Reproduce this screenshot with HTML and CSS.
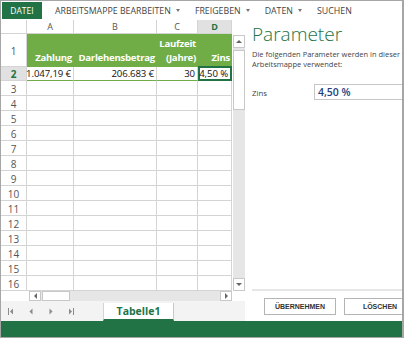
FILE: index.html
```html
<!DOCTYPE html>
<html lang="de">

<head>
    <meta charset="UTF-8">
    <meta name="viewport" content="width=device-width, initial-scale=1.0">
    <title>Tabelle1 - Parameter</title>
    <link rel="stylesheet" href="styles.css">
</head>

<body>

    <div class="app">

        <!-- Menüleiste -->
        <div class="ribbon">
            <span class="tab-file">DATEI</span>
            <span class="menu">ARBEITSMAPPE BEARBEITEN <i class="caret"></i></span>
            <span class="menu">FREIGEBEN <i class="caret"></i></span>
            <span class="menu">DATEN <i class="caret"></i></span>
            <span class="menu">SUCHEN</span>
        </div>

        <div class="main">

            <!-- Tabellenbereich -->
            <div class="sheet">
                <div class="grid-wrap">
                    <div class="grid" id="grid">
                        <div class="corner"></div>
                        <div class="colhead">A</div>
                        <div class="colhead">B</div>
                        <div class="colhead">C</div>
                        <div class="colhead active">D</div>

                        <div class="rowhead">1</div>
                        <div class="cell head">Zahlung</div>
                        <div class="cell head">Darlehensbetrag</div>
                        <div class="cell head">Laufzeit<br>(Jahre)</div>
                        <div class="cell head">Zins</div>

                        <div class="rowhead active">2</div>
                        <div class="cell data">1.047,19&nbsp;€</div>
                        <div class="cell data">206.683&nbsp;€</div>
                        <div class="cell data">30</div>
                        <div class="cell data selected">4,50&nbsp;%</div>
                    </div>
                    <div class="vscroll">
                        <div class="sb-btn"><i class="tri up"></i></div>
                        <div class="sb-thumb"></div>
                        <div class="sb-track"></div>
                        <div class="sb-btn"><i class="tri down"></i></div>
                    </div>
                </div>

                <div class="hscroll">
                    <div class="hs-btn"><i class="tri left"></i></div>
                    <div class="hs-thumb"></div>
                    <div class="hs-track"></div>
                    <div class="hs-btn"><i class="tri right"></i></div>
                </div>

                <div class="tabbar">
                    <div class="nav">
                        <svg width="6" height="7" viewBox="0 0 6 7"><rect x="0" y="0" width="1" height="7" fill="#8a8a8a"/><path d="M5 0.5 L2 3.5 L5 6.5 Z" fill="#8a8a8a"/></svg>
                        <svg width="6" height="7" viewBox="0 0 6 7"><path d="M4.5 0.5 L1.5 3.5 L4.5 6.5 Z" fill="#8a8a8a"/></svg>
                        <svg width="6" height="7" viewBox="0 0 6 7"><path d="M1.5 0.5 L4.5 3.5 L1.5 6.5 Z" fill="#8a8a8a"/></svg>
                        <svg width="6" height="7" viewBox="0 0 6 7"><path d="M1 0.5 L4 3.5 L1 6.5 Z" fill="#8a8a8a"/><rect x="5" y="0" width="1" height="7" fill="#8a8a8a"/></svg>
                    </div>
                    <div class="sheet-tab">Tabelle1</div>
                </div>
            </div>

            <!-- Aufgabenbereich -->
            <div class="pane">
                <h1>Parameter</h1>
                <p class="desc">Die folgenden Parameter werden in dieser Arbeitsmappe verwendet:</p>
                <div class="param">
                    <label for="zins">Zins</label>
                    <input type="text" id="zins" value="4,50 %">
                </div>
                <div class="pane-footer">
                    <button type="button">ÜBERNEHMEN</button>
                    <button type="button">LÖSCHEN</button>
                </div>
            </div>

        </div>

        <div class="statusbar"></div>

    </div>

    <script>
        // leere Zeilen 3 bis 16 erzeugen
        const grid = document.getElementById('grid');
        for (let r = 3; r <= 16; r++) {
            const head = document.createElement('div');
            head.className = 'rowhead';
            head.textContent = r;
            grid.appendChild(head);
            for (let c = 0; c < 4; c++) {
                const cell = document.createElement('div');
                cell.className = 'cell';
                grid.appendChild(cell);
            }
        }
    </script>

</body>

</html>
```

FILE: styles.css
```css
* {
    box-sizing: border-box;
}

body {
    margin: 0;
    font-family: "Open Sans", "Noto Sans", sans-serif;
    background: white;
}

.app {
    width: 404px;
    height: 338px;
    border: 1px solid #a6a6a6;
    border-right-width: 2px;
    display: flex;
    flex-direction: column;
    overflow: hidden;
}

/* Menüleiste */

.ribbon {
    height: 19px;
    display: flex;
    align-items: center;
    padding-left: 1px;
    font-size: 8.8px;
    color: #444;
    white-space: nowrap;
}

.tab-file {
    background: #217346;
    color: white;
    height: 17px;
    width: 40px;
    display: flex;
    align-items: center;
    justify-content: center;
    margin-right: 13px;
    font-size: 8.5px;
}

.menu {
    margin-right: 15px;
    display: flex;
    align-items: center;
}

.caret {
    display: inline-block;
    margin-left: 5px;
    border-left: 2.5px solid transparent;
    border-right: 2.5px solid transparent;
    border-top: 3px solid #777;
}

.main {
    flex: 1;
    display: flex;
    min-height: 0;
}

/* Tabelle */

.sheet {
    width: 244px;
    display: flex;
    flex-direction: column;
}

.grid-wrap {
    display: flex;
}

.grid {
    display: grid;
    grid-template-columns: 26px 47px 83px 41px 34px;
    grid-template-rows: 14px 33px 14px repeat(14, 15px);
    font-size: 9.6px;
}

.corner,
.colhead,
.rowhead,
.cell {
    border-right: 1px solid #d4d4d4;
    border-bottom: 1px solid #d4d4d4;
}

.colhead {
    color: #555;
    text-align: center;
    font-size: 9px;
    line-height: 13px;
}

.colhead.active {
    background: #e1e1e1;
    color: #217346;
    font-weight: bold;
}

.rowhead {
    color: #555;
    text-align: center;
    font-size: 10px;
    display: flex;
    align-items: center;
    justify-content: center;
    padding-top: 1px;
}

.rowhead.active {
    background: #e1e1e1;
    color: #217346;
    font-weight: bold;
}

.cell {
    white-space: nowrap;
    text-align: right;
    padding: 0 2px 0 0;
    display: flex;
    justify-content: flex-end;
}

.cell.head {
    background: #70ad47;
    border-right: none;
    border-bottom-color: #70ad47;
    color: white;
    font-weight: bold;
    letter-spacing: -0.25px;
    align-items: flex-end;
    line-height: 14px;
    padding-bottom: 1px;
}

.cell.data {
    color: #111;
    align-items: center;
    border-bottom: 1px solid #70ad47;
    overflow: visible;
    letter-spacing: -0.1px;
}

.cell.selected {
    border: 2px solid #217346;
    margin-top: -1px;
}

/* Bildlaufleisten */

.vscroll {
    width: 12px;
    margin-top: 15px;
    margin-left: 1px;
    display: flex;
    flex-direction: column;
    background: #e6e6e6;
}

.sb-btn,
.hs-btn {
    background: white;
    border: 1px solid #c8c8c8;
    display: flex;
    align-items: center;
    justify-content: center;
}

.sb-btn {
    height: 13px;
}

.sb-thumb {
    height: 60px;
    background: white;
    border: 1px solid #c8c8c8;
    margin-top: 2px;
}

.sb-track {
    flex: 1;
}

.tri {
    display: block;
    width: 0;
    height: 0;
}

.tri.up {
    border-left: 3px solid transparent;
    border-right: 3px solid transparent;
    border-bottom: 3px solid #666;
}

.tri.down {
    border-left: 3px solid transparent;
    border-right: 3px solid transparent;
    border-top: 3px solid #666;
}

.tri.left {
    border-top: 3px solid transparent;
    border-bottom: 3px solid transparent;
    border-right: 3px solid #666;
}

.tri.right {
    border-top: 3px solid transparent;
    border-bottom: 3px solid transparent;
    border-left: 3px solid #666;
}

.hscroll {
    height: 10px;
    margin-left: 28px;
    width: 203px;
    display: flex;
    background: #e6e6e6;
}

.hs-btn {
    width: 12px;
}

.hs-thumb {
    width: 28px;
    background: white;
    border: 1px solid #c8c8c8;
    margin-left: 1px;
}

.hs-track {
    flex: 1;
}

/* Blattregister */

.tabbar {
    flex: 1;
    background: #f3f3f3;
    display: flex;
    align-items: flex-end;
}

.nav {
    display: flex;
    gap: 14px;
    padding-left: 7px;
    align-self: center;
    width: 102px;
}

.sheet-tab {
    width: 71px;
    height: 18px;
    background: white;
    border-left: 1px solid #d4d4d4;
    border-right: 1px solid #c8c8c8;
    border-bottom: 2px solid #217346;
    color: #217346;
    font-weight: bold;
    font-size: 10.5px;
    text-align: center;
    line-height: 16px;
}

/* Aufgabenbereich */

.pane {
    flex: 1;
    padding: 0 0 0 7px;
    display: flex;
    flex-direction: column;
    overflow: hidden;
    background: white;
}

.pane h1 {
    margin: 1px 0 0;
    font-size: 19px;
    font-weight: 300;
    color: #217346;
    line-height: 26px;
}

.desc {
    margin: 2px 0 0;
    font-size: 7.5px;
    line-height: 10px;
    color: #444;
    width: 150px;
}

.param {
    margin-top: 15px;
    display: flex;
    align-items: center;
}

.param label {
    flex: none;
    font-size: 7.8px;
    color: #444;
    width: 62px;
    padding-top: 2px;
}

.param input {
    width: 110px;
    flex: none;
    height: 16px;
    border: 1px solid #c6c6c6;
    font-family: "Open Sans", sans-serif;
    font-size: 10.5px;
    font-weight: 600;
    color: #1f3e7c;
    padding: 0 3px;
}

.pane-footer {
    margin-top: auto;
    border-top: 2px solid #e6e6e6;
    display: flex;
    gap: 8px;
    padding: 7px 0 6px 12px;
}

.pane-footer button {
    flex: none;
    width: 72px;
    height: 17px;
    background: white;
    border: 1px solid #b4b4b4;
    font-family: "Liberation Sans", Arial, sans-serif;
    font-weight: bold;
    font-size: 7px;
    color: #333;
    padding: 0;
}

.statusbar {
    height: 16px;
    background: #217346;
}
```
